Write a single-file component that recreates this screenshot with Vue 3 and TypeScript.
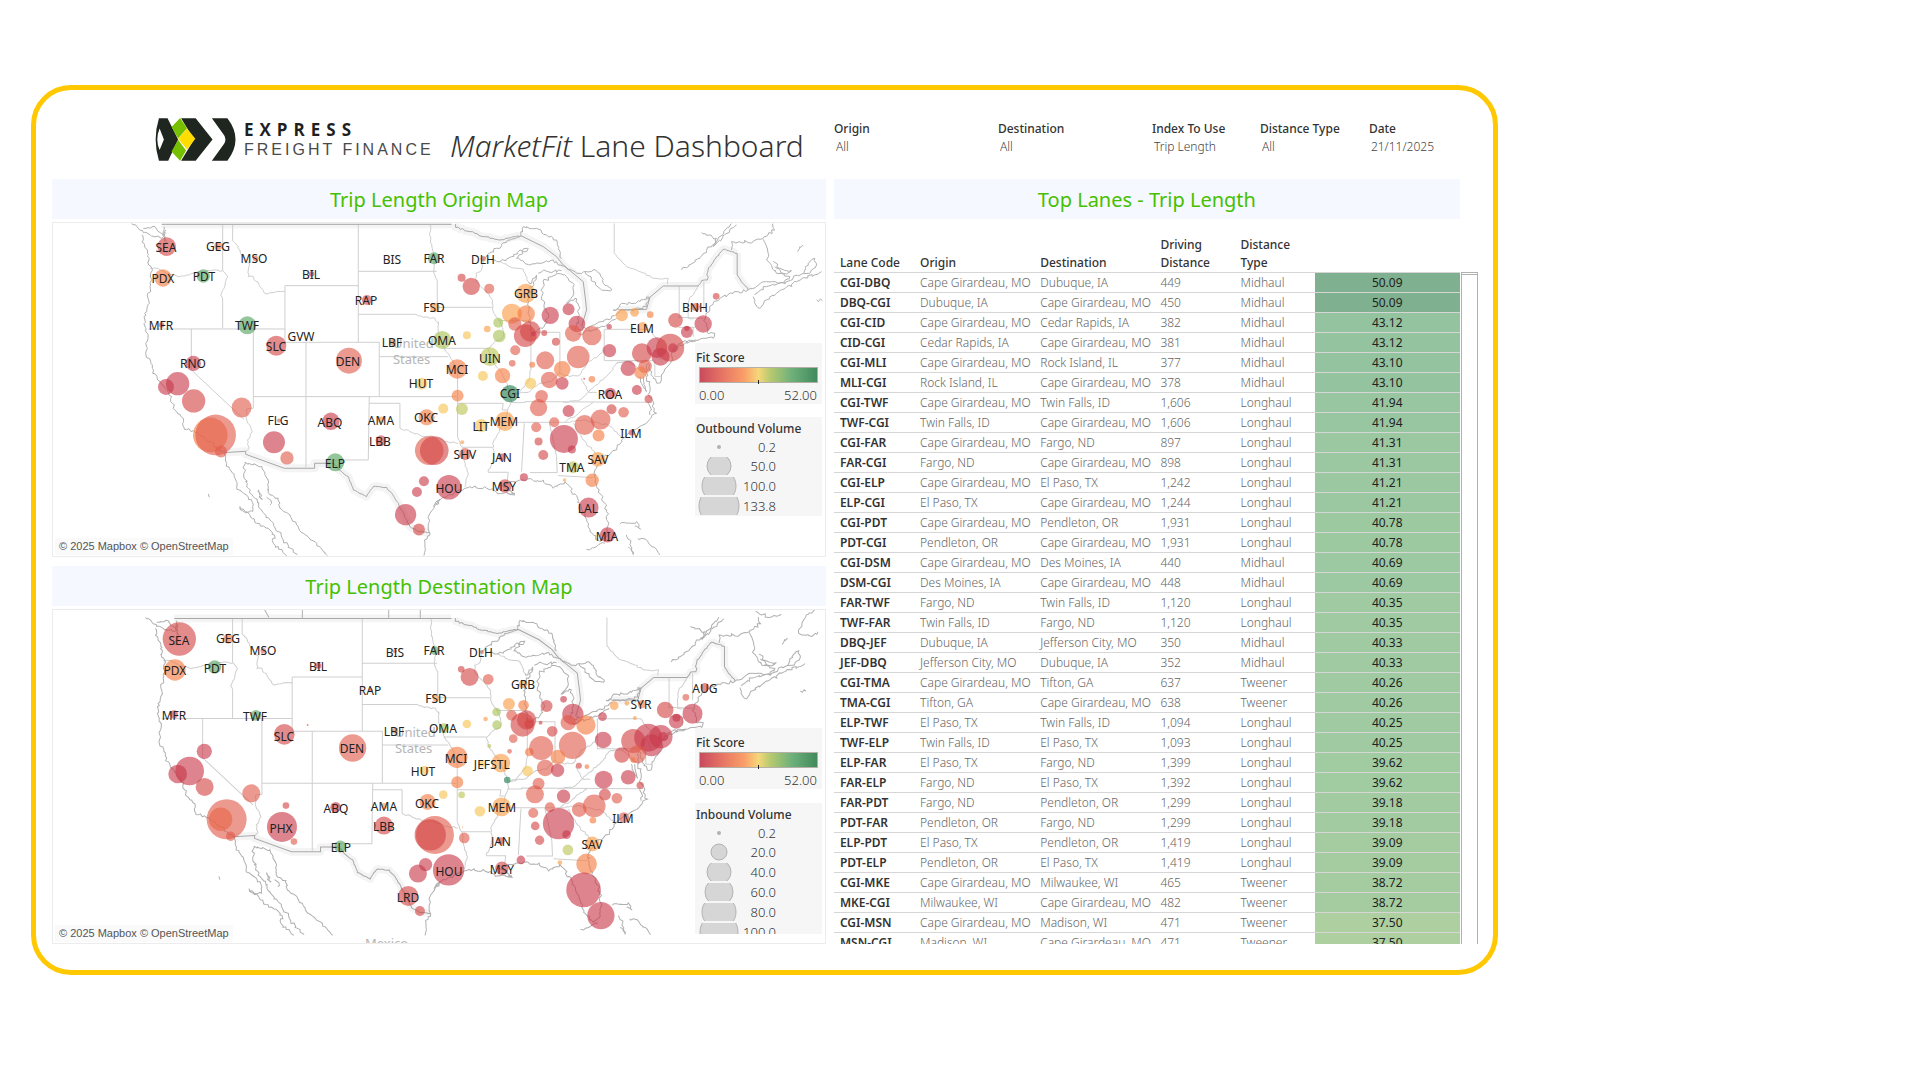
<script setup lang="ts">
type Tone = 'a' | 'b' | 'c' | 'd' | 'e' | 'f' | 'g' | 'h' | 'i' | 'j'
type Bubble = { x: number; y: number; r: number; tone: Tone }
type Label = { text: string; x: number; y: number }
interface VolumeStep { value: string; r: number }
interface MapPanel {
  id: string
  title: string
  volumeTitle: string
  steps: VolumeStep[]
  geoTransform: string
  top: number
  bubbles: Bubble[]
  labels: Label[]
  showNorth: boolean
}

/* Maps are surveyed on a grid three times finer than the drawing; EAST shifts the eastern sheet. */
const GRID = 3
const LEFT = 36
const EAST = 1140

const tones: Record<Tone, string> = {
  a: '#c8384a', b: '#d44545', c: '#e05a4a', d: '#f3793f', e: '#fa9a42',
  f: '#f7c451', g: '#bcc352', h: '#a5c254', i: '#52a35f', j: '#1f7d4c',
}

let seed = 7
function noise(): number {
  seed = (seed * 16807) % 2147483647
  return seed / 2147483647 - 0.5
}
function points(line: string, dx: number): number[][] {
  return line.trim().split(/\s+/).map((p) => {
    const [x, y] = p.split(',').map(Number)
    return [x + dx, y]
  })
}
/* Breaks long segments into small wandering steps so shores and rivers look natural. */
function trace(lines: string[], dx: number, wander: number): string {
  return lines.map((line) => {
    const pts = points(line, dx)
    let d = `M${pts[0][0]} ${pts[0][1]}`
    for (let i = 1; i < pts.length; i++) {
      const [x0, y0] = pts[i - 1]
      const [x1, y1] = pts[i]
      const n = wander ? Math.max(1, Math.round(Math.hypot(x1 - x0, y1 - y0) / 7)) : 1
      for (let k = 1; k < n; k++) {
        const t = k / n
        d += `L${Math.round(x0 + (x1 - x0) * t + noise() * wander)} ${Math.round(y0 + (y1 - y0) * t + noise() * wander)}`
      }
      d += `L${x1} ${y1}`
    }
    return d
  }).join('')
}

const westStates = [
  '548,45 548,182', '548,270 548,355', '325,357 735,357', '454,357 454,480 612,628', '640,357 640,595',
  '578,45 578,92', '735,227 955,227', '735,227 735,397', '955,45 955,397', '735,397 1018,397 1018,560',
  '798,397 798,772', '640,560 1250,560', '988,560 985,750 880,750', '988,580 1080,580 1080,655',
  '955,184 1190,184', '955,313 1128,313', '1018,440 1225,440',
]
const westRivers = [
  '330,175 355,175 380,190 420,200 460,190 500,182 548,182 563,200 542,255 548,270',
  '640,595 620,598 622,635 637,665 622,690 628,715 617,725',
  '578,92 600,120 610,140 628,160 625,200 640,200 660,230 678,252 710,245 735,245',
  '1080,655 1110,665 1150,680 1180,680 1220,695 1255,700', '1128,313 1150,322 1185,325 1195,340',
]
const westCoast = [
  '275,40 295,55 310,68 340,78 365,85 378,60', '310,55 345,50 375,80 372,95', '372,50 368,75 380,95 375,110 365,125',
  '305,75 312,100 322,120 328,145 326,165 335,175 330,230 322,290 312,320 318,355 325,375 318,425 332,460 338,490 360,515 375,535 395,560 392,575 410,605 430,625 433,658 460,662 478,675 500,690 530,712 552,728',
  '552,728 560,760 583,800 590,832 625,862 640,885 638,905 612,905 600,890 650,940 690,960 703,975 700,1000 740,1037',
  '615,757 612,790 625,835 640,860 665,900 690,930 715,965 730,990 752,1015 772,1035',
  '615,757 640,765 665,768 675,790 685,830 690,855 715,865 720,895 750,915 770,945 790,970 830,1000 862,1037',
  '655,840 668,868 658,862 655,840', '680,862 695,880 690,885', '505,852 508,862',
]
const westBorder = ['365,43 1235,43', '552,728 617,724 617,733 733,775 824,775 824,760 880,760']
const rioGrande = ['880,760 905,785 925,800 940,840 980,860 1000,830 1040,832 1065,865 1085,900 1110,950 1135,965 1170,968']

const eastStates = [
  '52,215 52,292 217,292', '70,415 205,415', '235,332 333,332', '333,368 333,480', '345,367 420,367 420,490',
  '553,358 690,358', '553,358 553,452 700,452', '113,500 113,680', '113,580 250,580 247,600 262,600',
  '270,578 315,578 315,575 697,577', '240,637 450,637', '127,712 218,712', '313,640 305,785', '388,637 410,740 412,788 330,788',
  '415,797 520,803', '205,787 265,787 262,815', '583,40 583,130', '778,228 778,322', '775,322 855,325', '775,352 825,352',
  '852,215 852,300', '705,452 705,500 722,500', '820,352 820,380',
]
const eastRivers = [
  '30,45 32,90 42,130 45,160 42,190 52,215', '55,335 55,370 70,410 90,440 105,470 113,500',
  '190,150 185,180 168,190 170,215 215,265 222,310 245,345 250,380 220,400 205,420 215,450 240,480 255,510 270,545 275,575 262,610 250,640 235,670 218,700 222,740 205,787',
  '333,480 325,515 300,545 275,555', '275,555 330,545 360,520 395,515 415,490 450,500 480,495 500,460 545,430 553,410',
  '127,712 130,740 145,790 135,830', '113,680 120,700 127,712', '460,640 490,690 535,740', '450,637 490,630 540,640 565,645 605,682',
  '435,637 475,610 520,578', '430,577 480,570 510,540 560,500 590,460 640,452', '485,505 505,545 530,548',
  '690,358 700,375 720,395 705,420 722,450', '240,155 270,170 310,178 325,215', '825,325 805,325 808,270 835,228',
  '583,130 620,170 650,180 700,205 745,205 743,222', '590,460 620,455 650,470 680,500',
]
const eastCoast = [
  '190,150 230,115 270,90 300,80', '215,150 240,155 275,140 300,120 325,115 290,145 330,165 360,160 400,150 420,165 440,175',
  '300,80 310,50 350,55 380,75 410,90 415,115 425,145', '325,215 335,220 350,195 330,240 322,270 328,330 335,368 350,370',
  '345,367 372,350 385,310 365,260 370,215 395,200 410,190 440,200 460,220 462,250 440,280 465,265 478,290 475,330 465,360',
  '440,175 480,190 520,180 540,190 550,220 575,240 545,240 520,215 495,185', '355,190 372,180 400,185 425,182',
  '480,360 520,345 575,325 600,305', '475,372 520,360 560,345 590,325',
  '580,300 600,285 660,275 690,262 680,290 640,302 600,300 580,300',
  '985,240 940,250 905,262 880,280 870,300 852,330 860,350 862,368 885,370 880,385 850,385 810,395 780,405 755,430 755,455 730,490 715,520 700,505 685,460',
  '685,460 680,500 690,530 688,560 700,575 697,590 710,610 680,640 640,660 605,690 590,720 545,745 525,780 530,830 555,880 567,940 560,980 540,995 510,965 495,920 480,880 450,830 435,815 400,835 370,810 310,810 270,815 250,830 285,850 240,850 200,835 150,830 135,835 60,870 30,910 25,960 30,970 15,1000 12,1037',
  '660,500 665,520 680,545 670,500', '685,580 695,600 690,615', '755,420 790,395 830,390',
  '785,180 840,145 900,80 935,40', '845,68 890,85 880,110 930,60 950,45', '935,120 935,95 1000,95 1030,85 1065,60 1060,40',
  '1030,88 1045,130 1040,150 1070,190 1110,200 1095,220 1040,215 985,240',
  '1000,260 1008,285 1020,295 1040,270 1070,250 1130,215 1205,185', '1150,190 1170,155 1185,145 1190,165 1170,190 1150,190 1100,215 1040,230 1005,255',
  '1060,155 1080,175 1115,182 1090,190 1065,170', '1133,125 1140,110 1150,105', '1190,270 1208,272',
  '600,942 650,935 662,958 645,950', '620,975 632,1000 640,1034 625,1012', '655,985 680,990 695,1010 712,1022 720,1035', '500,1018 530,1010 555,1000',
  '245,825 265,835 285,855 262,850', '45,880 60,868 40,890',
]
const eastBorder = [
  '107,42 107,52 150,65 190,80 240,90 280,80 305,78', '835,228 845,212 862,210 865,180 890,140 910,118 935,125 952,130',
  '952,195 970,220 985,240',
]
const eastBorderStraight = ['305,78 370,110 410,140 430,165 490,215 497,270 500,300 485,350', '952,130 952,195', '600,300 680,298 690,262 730,228 835,228']
const northOfBorder = ['645,10 662,40', '767,5 767,43', '1038,10 1038,43', '1137,42 1137,15 1247,15']
const newfoundland = ['1250,10 1215,30 1195,60 1185,90 1225,100 1245,85', '1050,20 1090,40 1130,30']

const geo = {
  states: trace(westStates, 0, 0) + trace(eastStates, EAST, 0),
  rivers: trace(westRivers, 0, 5) + trace(eastRivers, EAST, 5),
  coast: trace(westCoast, 0, 9) + trace(eastCoast, EAST, 9),
  border: trace(westBorder, 0, 0) + trace(rioGrande, 0, 3) + trace(eastBorder, EAST, 5) + trace(eastBorderStraight, EAST, 0),
  north: trace(northOfBorder, 0, 0),
  island: trace(newfoundland, EAST, 8),
}

function readBubbles(source: string, dx: number): Bubble[] {
  return source.trim().split(/\s+/).map((item) => {
    const [x, y, r, tone] = item.split(',')
    return { x: Number(x) + dx, y: Number(y), r: Number(r), tone: tone as Tone }
  })
}
function readLabels(source: string, dx: number): Label[] {
  return source.trim().split(/\s+/).map((item) => {
    const [text, x, y] = item.split(',')
    return { text, x: Number(x) + dx, y: Number(y) }
  })
}

const originWest = `380,110,28,b 369,204,26,d 535,108,12,d 490,198,20,i 646,145,8,c 815,192,8,a 1056,149,3,c 981,270,15,b 365,345,8,b
622,346,27,i 709,407,30,b 785,377,2,c 927,452,39,c 1058,397,10,d 1145,521,18,f 460,460,23,a 413,521,35,a 378,531,24,a 461,573,35,b
605,593,30,c 511,675,52,d 527,675,61,c 543,725,18,c 702,697,33,a 741,744,20,c 717,632,6,c 873,634,26,a 1023,630,10,e 1023,692,16,b
886,757,27,i 1160,622,24,d 1168,722,43,c 1183,722,43,b 1152,814,15,a 1131,846,15,a 1097,914,32,a 1137,959,18,b`
const originEast = `42,145,18,i 190,146,8,c 125,203,12,b 154,229,26,b 208,236,15,c 318,250,29,e 45,293,14,e 276,311,30,e 319,312,26,d
285,342,20,c 235,338,15,h 238,378,19,h 202,357,10,e 141,376,12,f 67,390,27,h 391,316,26,a 446,298,18,a 471,342,25,a 460,370,25,c
516,377,29,c 568,350,8,a 606,316,18,e 644,307,13,e 691,314,10,d 668,352,16,e 767,331,22,b 828,291,12,c 889,259,10,b 850,342,26,a
801,366,18,a 801,355,8,a 316,377,34,b 331,364,31,b 340,372,7,a 373,369,9,b 408,395,12,b 286,421,15,c 277,460,10,c 337,464,9,d
376,451,27,c 475,441,34,c 210,440,28,g 112,477,29,d 189,498,15,f 248,497,23,d 270,551,26,j 332,520,17,f 388,510,25,c 427,478,25,d
427,520,19,a 516,508,10,d 493,506,3,b 569,422,20,a 666,430,30,b 711,413,31,a 751,413,42,b 722,440,27,a 759,414,14,a 625,475,23,a
676,469,20,c 662,488,19,d 571,550,17,a 651,540,15,a 686,567,12,b 113,557,18,d 70,596,15,f 126,597,18,g 184,647,20,f 255,634,29,e
365,559,19,c 356,593,26,c 446,603,18,a 403,637,15,c 349,652,15,c 432,687,42,a 456,719,12,a 356,695,12,b 370,735,15,b 494,645,30,c
542,629,30,c 536,677,18,d 575,598,15,b 611,607,16,c 635,668,9,b 136,732,18,c 247,742,11,b 87,832,37,a 255,828,20,b 312,802,12,a
460,772,18,g 534,748,22,e 517,811,20,d 434,810,5,e 506,893,30,a 563,975,23,a 127,697,6,e`
const originLabelsWest = `SEA,380,114 PDX,371,206 GEG,536,109 PDT,492,200 MSO,642,146 BIL,815,194 BIS,1057,149 RAP,980,271 MFR,364,348
TWF,622,347 SLC,708,410 GVW,785,380 DEN,926,456 LBF,1056,398 HUT,1145,521 RNO,460,462 FLG,714,633 ABQ,872,638 AMA,1024,632
LBB,1022,696 ELP,886,762 OKC,1158,624`
const originLabelsEast = `FAR,42,146 DLH,190,150 GRB,318,251 FSD,44,293 OMA,68,392 UIN,210,446 MCI,112,480 CGI,270,552 ELM,668,356
BNH,826,293 ROA,571,553 LIT,184,650 MEM,254,636 ILM,635,671 SHV,136,734 JAN,248,744 HOU,87,836 MSY,254,830 TMA,458,773
SAV,534,750 LAL,506,895 MIA,562,979`

const destWest = `418,147,50,b 405,240,32,d 565,146,15,d 524,231,20,i 670,182,8,c 835,227,9,a 1065,184,6,c 993,301,6,c 402,373,12,b
648,376,16,i 733,433,31,b 803,405,3,c 938,474,41,c 1065,422,9,d 1153,542,14,f 493,484,23,a 449,543,43,a 413,552,28,a 494,591,27,b
634,610,27,c 542,688,35,d 560,688,60,c 572,739,14,c 738,647,10,b 726,711,45,a 762,755,10,c 887,652,16,a 1033,648,9,e 1032,707,27,b
901,770,18,i 1163,636,24,d 1185,735,57,c 1171,735,47,b 1157,824,20,a 1134,851,27,a 1105,918,30,b 1140,963,15,b`
const destEast = `86,840,47,a 45,182,13,i 186,186,6,c 124,238,10,b 149,261,27,b 205,268,16,c 309,283,12,e 48,325,10,e 267,342,18,e
311,346,16,d 275,376,16,c 230,366,13,h 231,405,14,h 197,387,7,e 141,402,13,f 72,415,15,h 380,348,18,b 431,328,10,a 459,373,32,a
445,398,23,c 498,405,29,d 548,380,13,a 583,347,13,e 621,340,7,e 666,343,12,d 645,384,6,e 736,360,25,b 798,322,10,c 855,292,13,b
818,371,30,a 769,394,22,a 770,383,12,a 308,404,36,b 320,390,29,b 327,402,14,b 362,398,6,b 397,424,16,b 280,446,13,c 208,468,6,g
269,484,7,c 328,486,13,d 364,474,36,c 458,466,41,c 111,502,32,d 186,521,9,f 243,519,28,e 262,570,10,j 323,543,16,f 376,534,25,c
414,501,22,d 413,541,20,a 477,527,9,b 501,530,7,d 550,450,25,a 640,453,36,b 685,443,42,a 695,466,33,a 723,440,35,a 730,440,14,a
606,495,23,b 652,493,27,c 640,510,8,d 551,569,27,a 625,562,22,a 661,586,11,b 112,577,18,d 70,614,13,f 125,615,10,g 180,664,16,f
245,651,28,e 356,581,18,c 345,613,27,c 431,619,20,a 390,652,15,c 340,669,15,c 416,701,47,a 440,734,13,a 346,708,13,b 359,751,14,b
478,659,22,c 523,648,34,c 519,691,10,d 555,614,18,b 591,625,16,c 612,683,16,c 133,744,16,c 243,753,11,b 246,835,20,b 303,810,13,a
444,780,16,g 517,762,22,e 500,822,31,d 420,818,7,e 491,900,52,a 543,977,41,a 128,712,2,e`
const destLabelsWest = `SEA,418,152 PDX,406,243 GEG,566,147 PDT,525,235 MSO,670,183 BIL,834,231 BIS,1066,187 RAP,992,303 MFR,404,376
TWF,647,380 SLC,732,440 DEN,938,477 LBF,1064,424 HUT,1151,544 PHX,725,716 ABQ,888,656 AMA,1033,650 LBB,1034,710 ELP,903,772
OKC,1161,640 LRD,1104,922`
const destLabelsEast = `FAR,44,183 DLH,184,188 GRB,309,285 FSD,48,325 OMA,70,417 MCI,110,506 JEF,187,524 STL,242,524 SYR,664,345
AUG,856,296 MEM,247,652 ILM,610,686 JAN,244,754 HOU,88,844 MSY,247,838 SAV,517,765`

const maps: MapPanel[] = [
  {
    id: 'origin',
    title: 'Trip Length Origin Map',
    volumeTitle: 'Outbound Volume',
    steps: [{ value: '0.2', r: 2 }, { value: '50.0', r: 12 }, { value: '100.0', r: 17 }, { value: '133.8', r: 20 }],
    geoTransform: '',
    top: 36,
    bubbles: [...readBubbles(originWest, 0), ...readBubbles(originEast, EAST)],
    labels: [...readLabels(originLabelsWest, 0), ...readLabels(originLabelsEast, EAST)],
    showNorth: false,
  },
  {
    id: 'destination',
    title: 'Trip Length Destination Map',
    volumeTitle: 'Inbound Volume',
    steps: [
      { value: '0.2', r: 2 }, { value: '20.0', r: 8 }, { value: '40.0', r: 12 },
      { value: '60.0', r: 14 }, { value: '80.0', r: 17 }, { value: '100.0', r: 19 },
    ],
    geoTransform: 'translate(54 44) scale(.956 .957)',
    top: 57,
    bubbles: [...readBubbles(destWest, 0), ...readBubbles(destEast, EAST)],
    labels: [...readLabels(destLabelsWest, 0), ...readLabels(destLabelsEast, EAST)],
    showNorth: true,
  },
]

function place(value: number, start: number): number {
  return Math.round((value - start) / GRID)
}

interface Filter { id: string; label: string; value: string }
const filters: Filter[] = [
  { id: 'origin', label: 'Origin', value: 'All' },
  { id: 'destination', label: 'Destination', value: 'All' },
  { id: 'index', label: 'Index To Use', value: 'Trip Length' },
  { id: 'distance', label: 'Distance Type', value: 'All' },
  { id: 'date', label: 'Date', value: '21/11/2025' },
]

const places: Record<string, string> = {
  CGI: 'Cape Girardeau, MO', DBQ: 'Dubuque, IA', CID: 'Cedar Rapids, IA', MLI: 'Rock Island, IL', TWF: 'Twin Falls, ID',
  FAR: 'Fargo, ND', ELP: 'El Paso, TX', PDT: 'Pendleton, OR', DSM: 'Des Moines, IA', JEF: 'Jefferson City, MO',
  TMA: 'Tifton, GA', MKE: 'Milwaukee, WI', MSN: 'Madison, WI',
}
const laneRows: [string, string, string, number][] = [
  ['CGI-DBQ', '449', 'Midhaul', 50.09], ['DBQ-CGI', '450', 'Midhaul', 50.09], ['CGI-CID', '382', 'Midhaul', 43.12],
  ['CID-CGI', '381', 'Midhaul', 43.12], ['CGI-MLI', '377', 'Midhaul', 43.1], ['MLI-CGI', '378', 'Midhaul', 43.1],
  ['CGI-TWF', '1,606', 'Longhaul', 41.94], ['TWF-CGI', '1,606', 'Longhaul', 41.94], ['CGI-FAR', '897', 'Longhaul', 41.31],
  ['FAR-CGI', '898', 'Longhaul', 41.31], ['CGI-ELP', '1,242', 'Longhaul', 41.21], ['ELP-CGI', '1,244', 'Longhaul', 41.21],
  ['CGI-PDT', '1,931', 'Longhaul', 40.78], ['PDT-CGI', '1,931', 'Longhaul', 40.78], ['CGI-DSM', '440', 'Midhaul', 40.69],
  ['DSM-CGI', '448', 'Midhaul', 40.69], ['FAR-TWF', '1,120', 'Longhaul', 40.35], ['TWF-FAR', '1,120', 'Longhaul', 40.35],
  ['DBQ-JEF', '350', 'Midhaul', 40.33], ['JEF-DBQ', '352', 'Midhaul', 40.33], ['CGI-TMA', '637', 'Tweener', 40.26],
  ['TMA-CGI', '638', 'Tweener', 40.26], ['ELP-TWF', '1,094', 'Longhaul', 40.25], ['TWF-ELP', '1,093', 'Longhaul', 40.25],
  ['ELP-FAR', '1,399', 'Longhaul', 39.62], ['FAR-ELP', '1,392', 'Longhaul', 39.62], ['FAR-PDT', '1,299', 'Longhaul', 39.18],
  ['PDT-FAR', '1,299', 'Longhaul', 39.18], ['ELP-PDT', '1,419', 'Longhaul', 39.09], ['PDT-ELP', '1,419', 'Longhaul', 39.09],
  ['CGI-MKE', '465', 'Tweener', 38.72], ['MKE-CGI', '482', 'Tweener', 38.72], ['CGI-MSN', '471', 'Tweener', 37.5],
  ['MSN-CGI', '471', 'Tweener', 37.5],
]
const lanes = laneRows.map(([code, distance, type, score]) => {
  const [from, to] = code.split('-')
  return { code, from: places[from], to: places[to], distance, type, score }
})

const scale: [number, number[]][] = [
  [37.5, [174, 207, 159]], [38.72, [165, 204, 160]], [40.25, [159, 202, 162]], [43.12, [147, 195, 159]], [50.09, [127, 176, 143]],
]
function scoreColor(score: number): string {
  for (let i = 1; i < scale.length; i++) {
    const [hi, high] = scale[i]
    const [lo, low] = scale[i - 1]
    if (score <= hi) {
      const t = (score - lo) / (hi - lo)
      return `rgb(${low.map((c, k) => Math.round(c + (high[k] - c) * t)).join(',')})`
    }
  }
  return 'rgb(127,176,143)'
}
</script>

<template>
  <main class="dashboard">
    <header class="brand">
      <svg class="mark" viewBox="0 0 246 130" aria-hidden="true">
        <path d="M14 1H40L72 65L42 129H14Q-6 65 14 1ZM16 32Q2 65 16 97L29 65Z" fill="#1f261f" fill-rule="evenodd" />
        <path d="M81 1H125L176 65L125 129H81L120 65Z" fill="#1f261f" />
        <path d="M78 0L99 31L72 62L52 27ZM72 66L96 98L78 129L52 101Z" fill="#76c000" />
        <path d="M99 32L124 63L99 95L72 63Z" fill="#ffdd00" />
        <path d="M174 1H221Q270 65 221 129H174L211 78Q219 65 211 52Z" fill="#1f261f" />
      </svg>
      <div class="company">
        <span class="company-top">EXPRESS</span>
        <span class="company-sub">FREIGHT FINANCE</span>
      </div>
      <h1><em>MarketFit</em> Lane Dashboard</h1>
    </header>

    <form class="filters">
      <div v-for="f in filters" :key="f.id" class="filter">
        <label :for="'filter-' + f.id">{{ f.label }}</label>
        <select :id="'filter-' + f.id"><option>{{ f.value }}</option></select>
      </div>
    </form>

    <div class="maps">
      <section v-for="m in maps" :key="m.id" class="panel">
        <h2>{{ m.title }}</h2>
        <div class="map">
          <svg class="canvas" viewBox="0 0 772 333" role="img" :aria-label="m.title">
            <g :transform="`scale(.3333) translate(${-LEFT - 3} ${-m.top - 3})`">
              <g :transform="m.geoTransform">
                <path class="halo" :d="geo.border" />
                <path class="line state" :d="geo.states" />
                <path class="line state" :d="geo.rivers" />
                <path class="line coast" :d="geo.coast" />
                <path class="line frontier" :d="geo.border" />
                <path v-if="m.showNorth" class="line coast" :d="geo.north + geo.island" />
              </g>
            </g>
            <g class="country">
              <text :x="m.showNorth ? 342 : 340" :y="m.showNorth ? 127 : 125">United</text>
              <text :x="m.showNorth ? 342 : 340" :y="m.showNorth ? 143 : 141">States</text>
              <text v-if="m.showNorth" x="312" y="338">Mexico</text>
            </g>
            <g :transform="`scale(.3333) translate(${-LEFT - 3} ${-m.top - 3})`">
              <circle v-for="(b, i) in m.bubbles" :key="i" class="bubble" :cx="b.x" :cy="b.y" :r="b.r" :fill="tones[b.tone]" />
            </g>
            <g class="codes">
              <text v-for="l in m.labels" :key="l.text" :x="place(l.x, LEFT + 4)" :y="place(l.y + 13, m.top + 3)">{{ l.text }}</text>
            </g>
          </svg>
          <small class="credit">© 2025 Mapbox © OpenStreetMap</small>
          <div :class="['legends', m.id]">
            <div class="legend">
              <h3>Fit Score</h3>
              <div class="ramp"></div>
              <div class="range"><span>0.00</span><span>52.00</span></div>
            </div>
            <div class="legend volume">
              <h3>{{ m.volumeTitle }}</h3>
              <ul>
                <li v-for="s in m.steps" :key="s.value">
                  <svg width="46" height="18" viewBox="-23 -9 46 18" aria-hidden="true">
                    <circle :r="s.r" :class="['step', { dot: s.r < 3 }]" />
                  </svg>
                  <span>{{ s.value }}</span>
                </li>
              </ul>
            </div>
          </div>
        </div>
      </section>
    </div>

    <section class="lanes">
      <h2>Top Lanes - Trip Length</h2>
      <div class="scroller">
        <table>
          <colgroup>
            <col class="w-code" /><col class="w-place" /><col class="w-place" /><col class="w-code" /><col class="w-code" /><col />
          </colgroup>
          <thead>
            <tr>
              <th>Lane Code</th><th>Origin</th><th>Destination</th><th>Driving<br />Distance</th><th>Distance<br />Type</th><td></td>
            </tr>
          </thead>
          <tbody>
            <tr v-for="lane in lanes" :key="lane.code">
              <th>{{ lane.code }}</th>
              <td>{{ lane.from }}</td>
              <td>{{ lane.to }}</td>
              <td>{{ lane.distance }}</td>
              <td>{{ lane.type }}</td>
              <td class="score" :style="{ backgroundColor: scoreColor(lane.score) }">{{ lane.score.toFixed(2) }}</td>
            </tr>
          </tbody>
        </table>
        <div class="gutter"><div class="track"></div></div>
      </div>
    </section>
  </main>
</template>

<style>
body {
  background: #fff;
}
</style>

<style scoped>
.dashboard {
  box-sizing: border-box;
  width: 76.4vw;
  margin: 85px 0 0 31px;
  padding: 0 15px 26px 16px;
  border: 5px solid #ffc800;
  border-radius: 40px;
  display: grid;
  grid-template-columns: minmax(0, 774fr) minmax(0, 644fr);
  grid-template-rows: 89px auto;
  column-gap: 8px;
  font-family: "Noto Sans", "Open Sans", sans-serif;
  font-size: 12px;
  color: #333;
}
.brand {
  display: flex;
  align-items: flex-start;
  padding: 28px 0 0 102px;
  white-space: nowrap;
}
.mark {
  width: 82px;
  height: 43px;
  flex: none;
}
.company {
  display: flex;
  flex-direction: column;
  width: 206px;
  padding: 2px 0 0 8px;
  box-sizing: border-box;
  line-height: 20px;
}
.company-top {
  font-family: "Open Sans", sans-serif;
  font-weight: 700;
  font-size: 17px;
  letter-spacing: 6px;
  color: #1f1f1f;
}
.company-sub {
  font-family: "Liberation Sans", sans-serif;
  font-size: 16px;
  letter-spacing: 3px;
  color: #4a4a4a;
}
h1 {
  margin: 8px 0 0 8px;
  font-size: 30px;
  line-height: 40px;
  font-weight: 300;
}
.filters {
  display: grid;
  grid-template-columns: 164fr 154fr 108fr 109fr 109fr;
  align-items: start;
  padding-top: 30px;
}
.filter {
  display: flex;
  flex-direction: column;
  line-height: 18px;
}
.filter label {
  font-weight: 500;
}
.filter select {
  appearance: none;
  align-self: flex-start;
  border: 0;
  margin: 0;
  padding: 0 2px;
  height: 18px;
  background: transparent;
  font: inherit;
  font-weight: 300;
  color: #444;
}
h2 {
  margin: 0;
  box-sizing: border-box;
  height: 40px;
  padding-top: 1px;
  line-height: 40px;
  background: #f5f8ff;
  color: #46c000;
  font-size: 20px;
  font-weight: 400;
  text-align: center;
}
.maps {
  display: flex;
  flex-direction: column;
  gap: 9px;
}
.map {
  position: relative;
  margin-top: 3px;
  border: 1px solid #ececec;
}
.canvas {
  display: block;
  width: 100%;
}
.line {
  fill: none;
  stroke-width: 1px;
  vector-effect: non-scaling-stroke;
}
.state {
  stroke: #cfcfcf;
}
.coast {
  stroke: #b0b0b0;
}
.frontier {
  stroke: #a8a8a8;
}
.halo {
  fill: none;
  stroke: #f4f4f4;
  stroke-width: 24px;
  stroke-linejoin: round;
}
.country {
  font-size: 13px;
  fill: #b5b5b5;
}
.bubble {
  fill-opacity: .62;
}
.codes {
  font-size: 12px;
  text-anchor: middle;
  fill: #222;
}
.credit {
  position: absolute;
  left: 2px;
  bottom: 1px;
  padding: 0 4px;
  background: #fafafa;
  font-family: "Liberation Sans", sans-serif;
  font-size: 11px;
  line-height: 17px;
  color: #555;
}
.legends {
  position: absolute;
  top: 120px;
  right: 3px;
  bottom: 9px;
  width: 127px;
  display: flex;
  flex-direction: column;
  gap: 13px;
}
.legends.destination {
  top: 118px;
  gap: 14px;
}
.legend {
  flex: none;
  background: #f6f6f6;
  height: 61px;
}
.legend.volume {
  flex: 0 1 auto;
  min-height: 0;
  height: auto;
  overflow: hidden;
}
h3 {
  margin: 0;
  font-size: 12px;
  font-weight: 500;
  line-height: 18px;
  padding: 6px 0 0 1px;
}
.volume h3 {
  padding-top: 3px;
}
.ramp {
  position: relative;
  height: 14px;
  margin: 0 4px;
  border: 1px solid #b5b0a5;
  background: linear-gradient(90deg, #c94a5c, #e87765 20%, #fa9f68 38%, #f5d77a 50%, #b8c96f 60%, #6fb17b 78%, #428a5c);
}
.ramp::after {
  content: "";
  position: absolute;
  left: 50%;
  top: 12px;
  width: 1px;
  height: 4px;
  background: #222;
}
.range {
  display: flex;
  justify-content: space-between;
  padding: 3px 5px 0 4px;
  font-size: 13px;
  line-height: 18px;
  font-weight: 300;
}
ul {
  list-style: none;
  margin: 0;
  padding: 0;
}
li {
  display: flex;
  align-items: center;
  height: 20px;
  padding-left: 1px;
  font-size: 13px;
  font-weight: 300;
}
li:first-child {
  height: 18px;
}
li svg {
  flex: none;
}
li span {
  width: 34px;
  text-align: right;
}
.step {
  fill: #d6d6d6;
  stroke: #b2b2b2;
  stroke-width: 1px;
}
.dot {
  fill: #b2b2b2;
  stroke: none;
}
.lanes {
  display: flex;
  flex-direction: column;
  height: 0;
  min-height: 100%;
}
.lanes h2 {
  flex: none;
  margin-right: 18px;
}
.scroller {
  flex: 1 1 0;
  min-height: 0;
  overflow: hidden;
  display: flex;
}
table {
  flex: 1;
  align-self: flex-start;
  table-layout: fixed;
  border-collapse: separate;
  border-spacing: 0;
}
.w-code {
  width: 12.8%;
}
.w-place {
  width: 19.2%;
}
th,
td {
  box-sizing: border-box;
  height: 20px;
  padding: 1px 0 0 6px;
  border-bottom: 1px solid #d6d6d6;
  line-height: 18px;
  text-align: left;
  white-space: nowrap;
}
thead th {
  height: 54px;
  vertical-align: bottom;
  font-weight: 500;
}
tbody th {
  font-weight: 600;
}
td {
  font-weight: 300;
  color: #666;
}
td.score {
  padding: 1px 0 0;
  text-align: center;
  font-weight: 400;
  color: #222;
}
.gutter {
  width: 18px;
  padding: 53px 0 0 1px;
  box-sizing: border-box;
}
.track {
  height: 100%;
  box-sizing: border-box;
  border: 1px solid #b0b0b0;
  border-bottom: 0;
  background: linear-gradient(#b0b0b0, #b0b0b0) 0 1px / 100% 1px no-repeat;
}
</style>
